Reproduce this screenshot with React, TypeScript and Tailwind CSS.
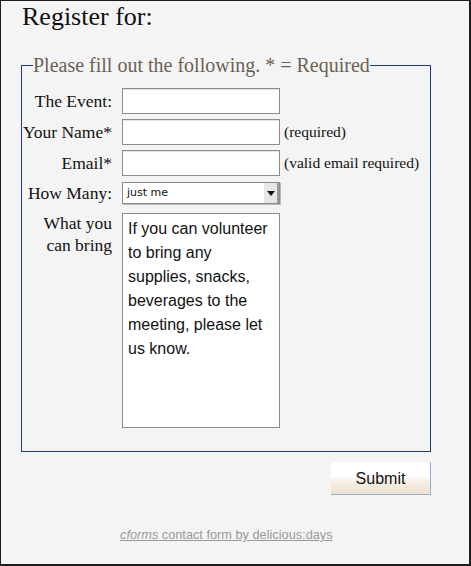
import { useState } from "react";

const serif = "font-['Liberation_Serif',serif]";

function Field({ label, note }: { label: string; note?: string }) {
  return (
    <>
      <label className="text-right text-[17.5px] leading-[20px] text-[#111]">
        {label}
      </label>
      <div className="flex items-center gap-[4px]">
        <input
          type="text"
          className="h-[26px] w-[158px] border border-[#8c8c8c] bg-white shadow-[inset_0_1px_1px_#e2e2e2] outline-none"
        />
        {note && <span className="text-[15.5px] text-[#111]">{note}</span>}
      </div>
    </>
  );
}

export default function App() {
  const [bring, setBring] = useState(
    "If you can volunteer to bring any supplies, snacks, beverages to the meeting, please let us know."
  );

  return (
    <div
      className={`h-[566px] w-[471px] border-t border-l border-r-2 border-b-2 border-[#1c1c1c] bg-[#f4f4f4] ${serif}`}
    >
      <h1 className="pl-[21px] pt-[1px] text-[26px] leading-[30px] text-[#111]">
        Register for:
      </h1>

      <fieldset className="mx-[20px] mt-[21px] w-[410px] border border-[#1f3c7e] pb-[23px]">
        <legend className="ml-[11px] text-[20px] leading-[24px] text-[#6e5f55]">
          Please fill out the following. * = Required
        </legend>

        <div className="mt-[11px] grid grid-cols-[90px_1fr] items-center gap-x-[10px] gap-y-[5px]">
          <Field label="The Event:" />
          <Field label="Your Name*" note="(required)" />
          <Field label="Email*" note="(valid email required)" />

          <label className="text-right text-[17.5px] leading-[20px] text-[#111]">
            How Many:
          </label>
          <div className="mt-[1px] flex h-[22px] w-[158px] items-center border border-[#8c8c8c] bg-white shadow-[1px_1px_0_#b9b9b9]">
            <span className="flex-1 pl-[4px] font-['DejaVu_Sans',sans-serif] text-[11px] text-[#111]">
              just me
            </span>
            <span className="flex h-full w-[15px] items-center justify-center border-r-2 border-[#9a9a9a] bg-[#e6e6e6]">
              <svg width="8" height="5" viewBox="0 0 8 5">
                <path d="M0 0h8L4 5z" fill="#111" />
              </svg>
            </span>
          </div>

          <label className="self-start pt-[3px] text-right text-[17.5px] leading-[22px] text-[#111]">
            What you can bring
          </label>
          <textarea
            value={bring}
            onChange={(e) => setBring(e.target.value)}
            className="mt-[4px] h-[215px] w-[158px] resize-none border border-[#8c8c8c] bg-white px-[5px] py-[3px] font-['Liberation_Sans',sans-serif] text-[16px] leading-[24px] text-[#111] outline-none"
          />
        </div>
      </fieldset>

      <div className="mr-[38px] mt-[10px] flex justify-end">
        <button className="h-[33px] w-[100px] border-r border-b border-[#8fb0d4] bg-[linear-gradient(#fff_0%,#fff_45%,#f6efe4_60%,#eee2cf_100%)] pt-[2px] font-['Liberation_Sans',sans-serif] text-[16px] text-[#111]">
          Submit
        </button>
      </div>

      <p className="mt-[30px] pl-[119px] font-['Liberation_Sans',sans-serif] text-[12.75px] text-[#9a9a9a]">
        <a href="#" className="underline">
          <em>cforms</em> contact form by delicious:days
        </a>
      </p>
    </div>
  );
}
